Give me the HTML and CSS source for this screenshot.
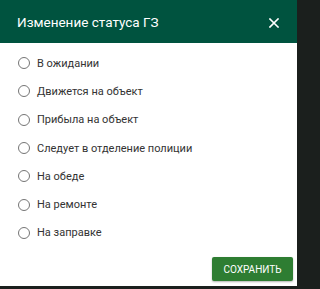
FILE: index.html
```html
<!DOCTYPE html>
<html lang="ru">
<head>
<meta charset="utf-8">
<link rel="stylesheet" href="styles.css">
</head>
<body>
<div class="dialog">
  <div class="header">
    <span class="title">Изменение статуса ГЗ</span>
    <svg class="close" width="10" height="10" viewBox="0 0 10 10"><path d="M1 1L9 9M9 1L1 9" stroke="#fff" stroke-width="1.6" stroke-linecap="square"/></svg>
  </div>
  <div class="content">
    <label class="option"><span class="radio"></span><span class="label">В ожидании</span></label>
    <label class="option"><span class="radio"></span><span class="label">Движется на объект</span></label>
    <label class="option"><span class="radio"></span><span class="label">Прибыла на объект</span></label>
    <label class="option"><span class="radio"></span><span class="label">Следует в отделение полиции</span></label>
    <label class="option"><span class="radio"></span><span class="label">На обеде</span></label>
    <label class="option"><span class="radio"></span><span class="label">На ремонте</span></label>
    <label class="option"><span class="radio"></span><span class="label">На заправке</span></label>
  </div>
  <div class="actions">
    <button class="save">СОХРАНИТЬ</button>
  </div>
</div>
</body>
</html>
```
FILE: styles.css
```css
html, body {
  margin: 0;
  padding: 0;
  background: #1b1f1d;
}
.dialog {
  width: 297px;
  height: 286px;
  background: #fff;
  display: flex;
  flex-direction: column;
  font-family: Roboto, "Liberation Sans", sans-serif;
}
.header {
  height: 43px;
  flex: none;
  background: #00533f;
  display: flex;
  align-items: center;
  justify-content: space-between;
  padding: 0 18px 0 17px;
  box-sizing: border-box;
}
.title {
  color: #fff;
  font-size: 13.5px;
  padding-top: 1px;
}
.close {
  display: block;
  margin-top: 2px;
}
.content {
  display: flex;
  flex-direction: column;
  padding: 6px 0 0 18px;
  flex: 1;
}
.option {
  display: flex;
  align-items: center;
  height: 28.3px;
  gap: 7px;
}
.radio {
  width: 10px;
  height: 10px;
  border: 1.6px solid #757575;
  border-radius: 50%;
  flex: none;
}
.label {
  font-size: 11px;
  color: #333;
}
.actions {
  display: flex;
  justify-content: flex-end;
  padding: 0 4px 5px 0;
}
.save {
  background: #2e7d32;
  color: #fff;
  border: none;
  border-radius: 2px;
  font-family: Roboto, "Liberation Sans", sans-serif;
  font-size: 10px;
  height: 24px;
  width: 81px;
  padding: 0;
  box-shadow: 0 1px 2px rgba(0,0,0,0.3);
}
```
